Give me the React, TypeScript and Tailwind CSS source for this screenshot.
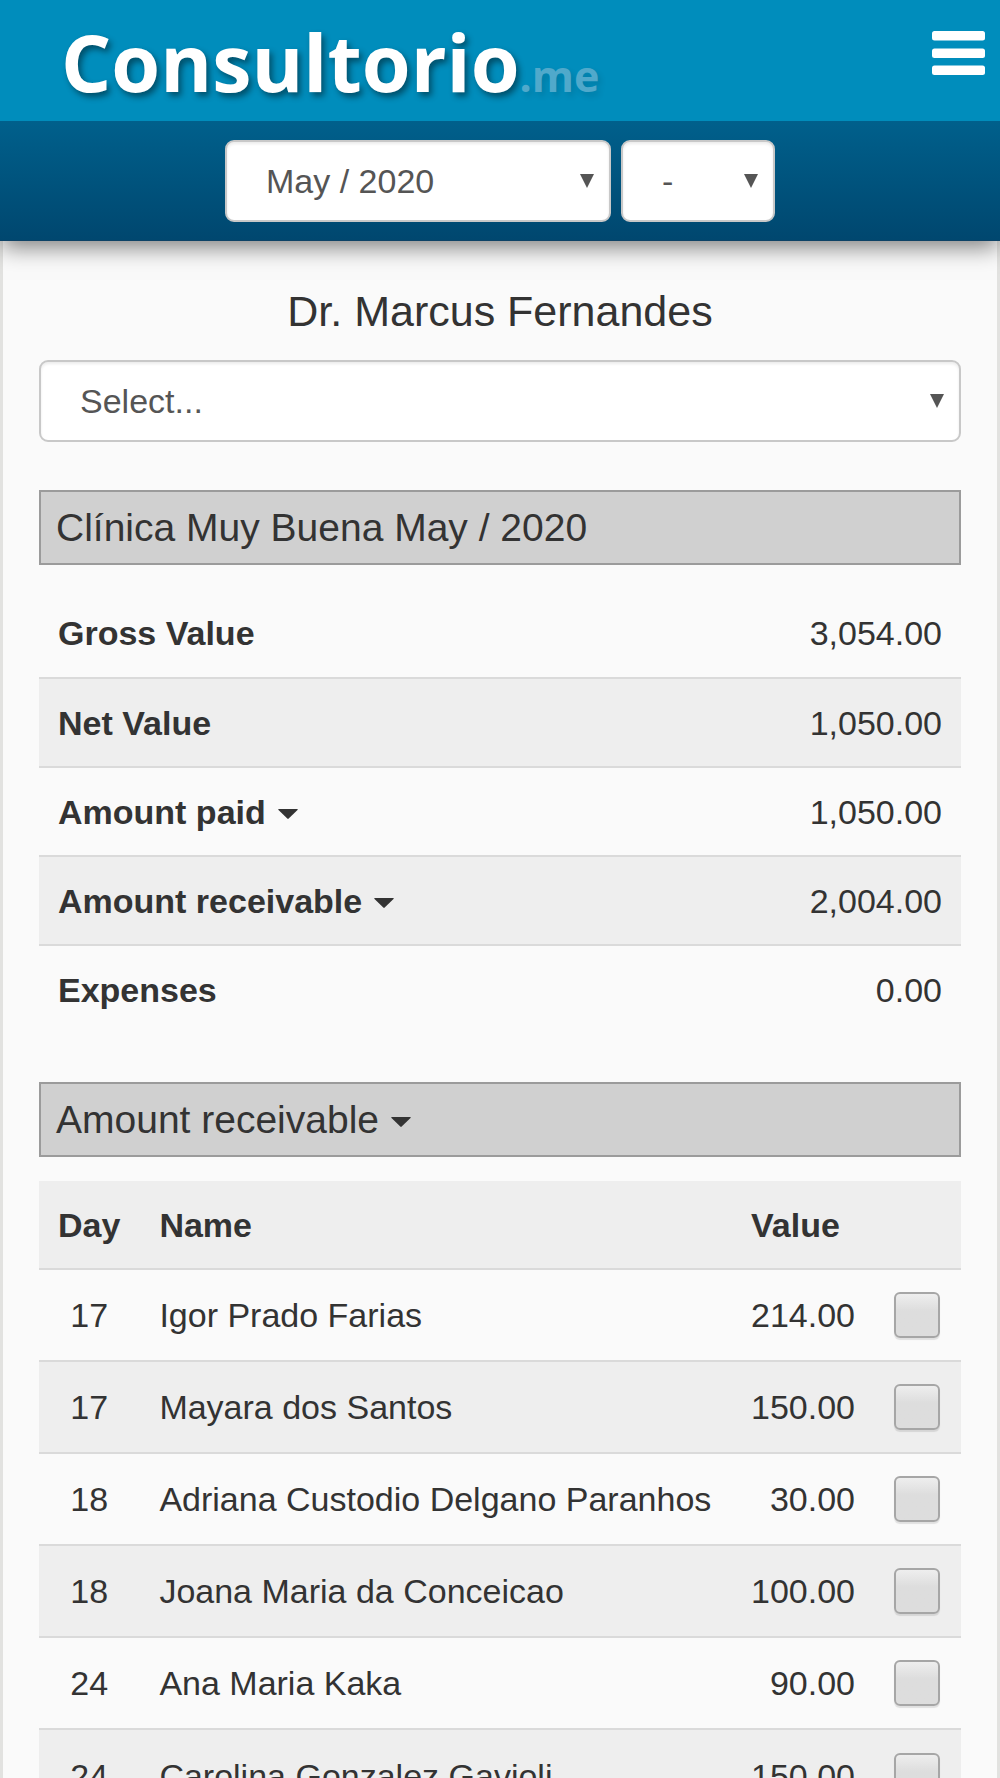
import type { ReactNode } from "react";

const summary = [
  { label: "Gross Value", value: "3,054.00", expandable: false },
  { label: "Net Value", value: "1,050.00", expandable: false },
  { label: "Amount paid", value: "1,050.00", expandable: true },
  { label: "Amount receivable", value: "2,004.00", expandable: true },
  { label: "Expenses", value: "0.00", expandable: false },
];

const receivables = [
  { day: 17, name: "Igor Prado Farias", value: "214.00" },
  { day: 17, name: "Mayara dos Santos", value: "150.00" },
  { day: 18, name: "Adriana Custodio Delgano Paranhos", value: "30.00" },
  { day: 18, name: "Joana Maria da Conceicao", value: "100.00" },
  { day: 24, name: "Ana Maria Kaka", value: "90.00" },
  { day: 24, name: "Carolina Gonzalez Gavioli", value: "150.00" },
];

function Caret() {
  return (
    <svg aria-hidden="true" viewBox="0 0 20 10" className="mt-1 h-[10px] w-5 shrink-0 fill-current">
      <path d="M.8 0h18.4q1 .2.3 1L10.7 9.600q-.7.6-1.400 0L.5 1Q-.2.2.8 0z" />
    </svg>
  );
}

function Select({ label, option, className }: { label: string; option: string; className: string }) {
  return (
    <div className={`relative ${className}`}>
      <select
        aria-label={label}
        className="block h-[82px] w-full appearance-none rounded-[9px] border-2 border-[#c8c8c8] bg-white pr-12 pl-[39px] text-[34px] leading-[48px] text-[#555] shadow-[inset_0_2px_3px_rgba(0,0,0,0.08)]"
      >
        <option>{option}</option>
      </select>
      <svg
        aria-hidden="true"
        viewBox="0 0 14 14"
        className="pointer-events-none absolute top-[34px] right-[17px] h-[14px] w-[14px] fill-[#555]"
      >
        <path d="M0 0h14L7 14z" />
      </svg>
    </div>
  );
}

function SectionTitle({ children }: { children: ReactNode }) {
  return (
    <h2 className="flex h-[75px] items-center border-2 border-[#9b9b9b] bg-[#d0d0d0] px-[15px] text-[39px] leading-none">
      {children}
    </h2>
  );
}

export default function App() {
  return (
    <div className="min-h-screen overflow-x-hidden bg-[#fafafa] font-['Liberation_Sans',Arial,sans-serif] text-[34px] leading-none text-[#333]">
      <header className="relative shadow-[0_8px_22px_-2px_rgba(0,0,0,0.5)]">
        <div className="flex h-[121px] items-start justify-between bg-[#008dbc] pr-[15px] pl-[61px]">
          <a
            href="#"
            className="pt-1 font-['Open_Sans',sans-serif] text-[79px] leading-[116px] font-bold text-white [text-shadow:3px_4px_6px_rgba(0,0,0,0.45)]"
          >
            Consultorio<span className="text-[43px] text-[#50a9cb] [text-shadow:3px_4px_6px_rgba(0,0,0,0.12)]">.me</span>
          </a>
          <button aria-label="Menu" className="mt-[31px]">
            <svg aria-hidden="true" viewBox="0 0 53 44" className="h-[44px] w-[53px] fill-white">
              <rect width="53" height="9.500" rx="2.500" />
              <rect y="17.500" width="53" height="9.500" rx="2.500" />
              <rect y="34.500" width="53" height="9.500" rx="2.500" />
            </svg>
          </button>
        </div>
        <div className="flex h-[120px] items-center justify-center gap-[10px] border-b border-[#0d4266] bg-linear-to-b from-[#00608c] to-[#00476f]">
          <Select label="Month" option="May / 2020" className="w-[386px]" />
          <Select label="Day" option="-" className="w-[154px]" />
        </div>
      </header>

      <main className="border-x-3 border-[#e2e2e0] px-9 pb-8">
        <h1 className="pt-[46px] pb-[25px] text-center text-[43px] leading-[48px]">Dr. Marcus Fernandes</h1>
        <Select label="Clinic" option="Select..." className="w-full" />

        <section className="mt-12">
          <SectionTitle>Clínica Muy Buena May / 2020</SectionTitle>
          <table className="mt-6 w-full border-collapse">
            <tbody>
              {summary.map((row) => (
                <tr key={row.label} className="h-[89px] border-t-2 border-[#dadada] first:border-t-0 even:bg-[#eee]">
                  <th scope="row" className="px-[19px] text-left font-bold">
                    {row.expandable ? (
                      <button className="flex items-center gap-3">
                        {row.label}
                        <Caret />
                      </button>
                    ) : (
                      row.label
                    )}
                  </th>
                  <td className="px-[19px] text-right">{row.value}</td>
                </tr>
              ))}
            </tbody>
          </table>
        </section>

        <section className="mt-12">
          <SectionTitle>
            <button className="flex items-center gap-3">
              Amount receivable
              <Caret />
            </button>
          </SectionTitle>
          <table className="mt-6 w-full border-collapse">
            <thead>
              <tr className="h-[88px] bg-[#eee] text-left">
                <th scope="col" className="px-[19px]">Day</th>
                <th scope="col" className="w-full px-5">Name</th>
                <th scope="col" className="px-5">Value</th>
                <td />
              </tr>
            </thead>
            <tbody>
              {receivables.map((row) => (
                <tr key={row.name} className="h-[92px] border-t-2 border-[#dadada] even:bg-[#eee]">
                  <td className="px-[19px] text-center">{row.day}</td>
                  <td className="pl-5 whitespace-nowrap">{row.name}</td>
                  <td className="px-5 text-right">{row.value}</td>
                  <td className="pr-[21px] pl-[19px]">
                    <input
                      type="checkbox"
                      aria-label={`Select ${row.name}`}
                      className="block size-[46px] appearance-none rounded-[6px] border-2 border-[#a6a6a6] bg-linear-to-b from-[#eee] to-[#ddd] to-40% shadow-[0_2px_1px_rgba(0,0,0,0.1)] checked:bg-[#008dbc]"
                    />
                  </td>
                </tr>
              ))}
            </tbody>
          </table>
        </section>
      </main>
    </div>
  );
}
